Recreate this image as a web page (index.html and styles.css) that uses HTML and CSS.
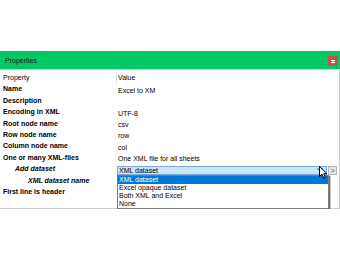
FILE: index.html
```html
<!DOCTYPE html>
<html>
<head>
    <meta charset="UTF-8">
    <title>Properties</title>
    <link rel="stylesheet" href="styles.css">
</head>
<body>
    <div class="panel">
        <div class="titlebar">
            <span class="title">Properties</span>
            <span class="close">
                <svg width="4" height="3" viewBox="0 0 4 3"><path d="M0 0.5h4M0 2.5h4M2 0.5v2" stroke="#fff" stroke-width="1"/></svg>
            </span>
        </div>

        <div class="grid">
            <div class="row head">
                <div class="lbl">Property</div>
                <div class="val">Value</div>
                <div></div>
            </div>
            <div class="row">
                <div class="lbl bold">Name</div>
                <div class="val">Excel to XM</div>
                <div></div>
            </div>
            <div class="row">
                <div class="lbl bold">Description</div>
                <div class="val"></div>
                <div></div>
            </div>
            <div class="row">
                <div class="lbl bold">Encoding in XML</div>
                <div class="val">UTF-8</div>
                <div></div>
            </div>
            <div class="row">
                <div class="lbl bold">Root node name</div>
                <div class="val">csv</div>
                <div></div>
            </div>
            <div class="row">
                <div class="lbl bold">Row node name</div>
                <div class="val">row</div>
                <div></div>
            </div>
            <div class="row">
                <div class="lbl bold">Column node name</div>
                <div class="val">col</div>
                <div></div>
            </div>
            <div class="row">
                <div class="lbl bold">One or many XML-files</div>
                <div class="val">One XML file for all sheets</div>
                <div></div>
            </div>
            <div class="row">
                <div class="lbl bold italic indent1">Add dataset</div>
                <div class="val-combo">
                    <div class="combo">
                        <span>XML dataset</span>
                        <svg class="chevron" width="6" height="4" viewBox="0 0 6 4"><path d="M0.5 0.5L3 3L5.5 0.5" fill="none" stroke="#333" stroke-width="1"/></svg>
                        <ul class="list">
                            <li class="sel">XML dataset</li>
                            <li>Excel opaque dataset</li>
                            <li>Both XML and Excel</li>
                            <li>None</li>
                        </ul>
                        <svg class="cursor" width="9" height="13" viewBox="0 0 9 13"><path d="M0.5 0.5V10.5L3 8.2L4.8 12.2L6.4 11.5L4.7 7.7H8Z" fill="#fff" stroke="#000" stroke-width="1" stroke-linejoin="round"/></svg>
                    </div>
                </div>
                <div class="val-combo"><span class="more">&gt;</span></div>
            </div>
            <div class="row">
                <div class="lbl bold italic indent2">XML dataset name</div>
                <div class="val"></div>
                <div></div>
            </div>
            <div class="row">
                <div class="lbl bold">First line is header</div>
                <div class="val"></div>
                <div></div>
            </div>
        </div>
    </div>
</body>
</html>
```

FILE: styles.css
```css
body {
    margin: 0;
    background: #fff;
    font-family: "Liberation Sans", Arial, sans-serif;
    font-size: 7px;
    color: #000;
}
.panel {
    margin-top: 51px;
    width: 340px;
}
.titlebar {
    height: 18px;
    background: #03c865;
    border-bottom: 1px solid #bfe3c9;
    display: flex;
    align-items: center;
    justify-content: space-between;
    padding-left: 5px;
}
.title {
    color: #1a1a1a;
}
.close {
    width: 10px;
    height: 10px;
    margin: 2px 2px 0 0;
    background: #c85050;
    display: flex;
    align-items: center;
    justify-content: center;
}
.grid {
    width: 339px;
    border-right: 1px solid #cdcdcd;
    border-bottom: 1px solid #cdcdcd;
    padding: 2px 0 10.6px;
    background: linear-gradient(#d4d4d4, #d4d4d4) no-repeat;
    background-size: 1px 33px;
    background-position: 330px bottom;
}
.row {
    display: grid;
    grid-template-columns: 116px 212px 1fr;
    height: 11.4px;
}
.lbl {
    padding-left: 3px;
    line-height: 11.4px;
    white-space: nowrap;
}
.bold {
    font-weight: bold;
}
.italic {
    font-style: italic;
}
.indent1 {
    padding-left: 15px;
}
.indent2 {
    padding-left: 28px;
}
.val {
    padding: 3.4px 0 0 2px;
    line-height: 8px;
    white-space: nowrap;
}
.head .val {
    padding: 0 0 0 1px;
    line-height: 11.4px;
    border-left: 1px solid #dcdcdc;
}
.val-combo {
    padding-top: 2.6px;
}
.combo {
    position: relative;
    margin-left: 1px;
    width: 210px;
    height: 9px;
    box-sizing: border-box;
    background: #cce4f7;
    border: 1px solid #7aa7d6;
    display: flex;
    align-items: center;
    justify-content: space-between;
    padding: 0 3px 0 1px;
    line-height: 7px;
}
.chevron {
    display: block;
}
.list {
    position: absolute;
    top: 8px;
    left: -1px;
    width: 210px;
    margin: 0;
    padding: 0;
    list-style: none;
    background: #fff;
    border: 1px solid #7a7a7a;
    box-shadow: 1px 1px 1px rgba(0, 0, 0, 0.55);
    z-index: 2;
}
.list li {
    height: 8px;
    line-height: 8px;
    padding-left: 1px;
}
.list .sel {
    background: #0078d7;
    color: #fff;
}
.cursor {
    position: absolute;
    left: 201px;
    top: -1px;
    z-index: 3;
}
.more {
    display: block;
    width: 9px;
    height: 9px;
    box-sizing: border-box;
    background: #e5e5e5;
    border: 1px solid #b4b4b4;
    color: #555;
    text-align: center;
    line-height: 7px;
}
```
